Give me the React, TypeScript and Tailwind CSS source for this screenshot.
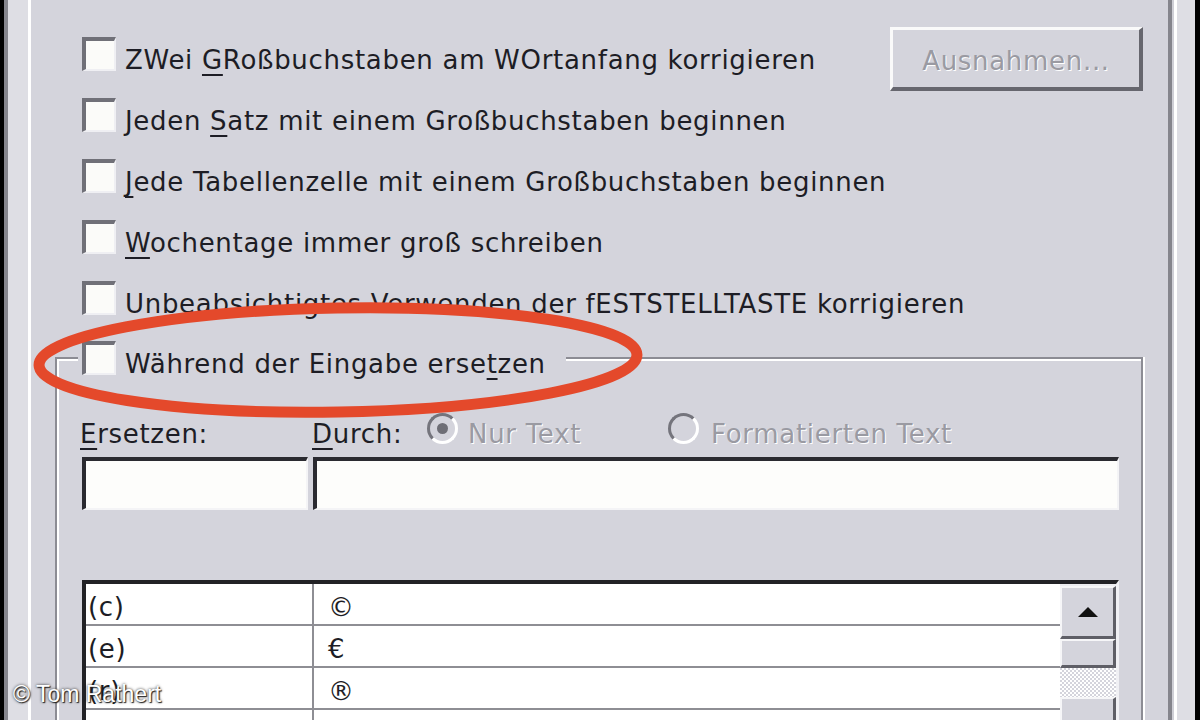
import React from "react";

function U({ children }: { children: React.ReactNode }) {
  return <span className="underline decoration-2 underline-offset-[5px]">{children}</span>;
}

function Check() {
  return (
    <div className="w-[34px] h-[34px] shrink-0 bg-[#fbfbf9] border-solid border-t-[4px] border-l-[4px] border-b-[2px] border-r-[2px] border-t-[#707078] border-l-[#707078] border-b-[#efeff3] border-r-[#efeff3]" />
  );
}

function Radio({ on }: { on?: boolean }) {
  return (
    <div className="w-[31px] h-[31px] shrink-0 rounded-full border-[3px] border-solid border-t-[#74747c] border-l-[#74747c] border-b-white border-r-white bg-[#d4d4dc] flex items-center justify-center">
      {on && <div className="w-[11px] h-[11px] rounded-full bg-[#6e6e76]" />}
    </div>
  );
}

function Option({ children }: { children: React.ReactNode }) {
  return (
    <div className="flex items-center gap-[9px] h-[34px]">
      <Check />
      <span className="whitespace-nowrap mt-[12px]">{children}</span>
    </div>
  );
}

const rows = [
  ["(c)", "©"],
  ["(e)", "€"],
  ["(r)", "®"],
  ["(tm)", "™"],
];

export default function App() {
  return (
    <div className="relative w-[1200px] h-[720px] overflow-hidden flex bg-[#d4d4dc] text-[#1d1d25] font-['DejaVu_Sans',sans-serif] text-[26px] tracking-[0.7px] leading-[34px]">
      {/* left window frame */}
      <div className="flex shrink-0">
        <div className="w-[4px] bg-black" />
        <div className="w-[4px] bg-[#85858d]" />
        <div className="w-[20px] bg-[#dedee4]" />
        <div className="w-[3px] bg-white" />
      </div>

      <div className="w-[1137px] shrink-0 flex flex-col">
        <div className="ml-[49px] w-[1065px] h-[2px] bg-[#8c8c94]" />
        <div className="ml-[49px] w-[1065px] h-[2px] bg-white" />

        <div className="pl-[51px] mt-[37px] flex flex-col gap-[27px]">
          <div className="flex items-start h-[34px]">
            <Option>
              ZWei <U>G</U>Roßbuchstaben am WOrtanfang korrigieren
            </Option>
            <div className="ml-auto mr-[25px] -mt-[10px] h-[64px] w-[253px] shrink-0 flex items-center justify-center pt-[4px] border-solid border-t-[3px] border-l-[3px] border-b-[4px] border-r-[4px] border-t-[#fafafa] border-l-[#fafafa] border-b-[#66666e] border-r-[#66666e] text-[#9a9aa2] [text-shadow:1px_1px_0_#fff]">
              Ausnahmen...
            </div>
          </div>
          <Option>
            Jeden <U>S</U>atz mit einem Großbuchstaben beginnen
          </Option>
          <Option>
            <U>J</U>ede Tabellenzelle mit einem Großbuchstaben beginnen
          </Option>
          <Option>
            <U>W</U>ochentage immer groß schreiben
          </Option>
          <Option>Unbeabsichtigtes Verwenden der fESTSTELLTASTE korrigieren</Option>
        </div>

        <fieldset className="mt-[26px] ml-[24px] w-[1088px] h-[420px] shrink-0 border-2 border-solid border-[#8c8c94] shadow-[inset_2px_2px_0_#fff,2px_0_0_#fff] pl-[21px] pr-[21px]">
          <legend className="pl-[4px] pr-[20px] bg-[#d4d4dc]">
            <Option>
              Während der Eingabe erse<U>t</U>zen
            </Option>
          </legend>

          <div className="pl-[2px]">
            <div className="mt-[36px] h-[34px] flex items-center whitespace-nowrap">
              <span className="w-[232px] shrink-0 mt-[12px]">
                <U>E</U>rsetzen:
              </span>
              <span className="w-[115px] shrink-0 mt-[12px]">
                <U>D</U>urch:
              </span>
              <div className="w-[241px] shrink-0 flex items-center gap-[10px]">
                <Radio on />
                <span className="mt-[12px] text-[#9a9aa2] [text-shadow:1px_1px_0_#fff]">Nur Text</span>
              </div>
              <div className="flex items-center gap-[12px]">
                <Radio />
                <span className="mt-[12px] text-[#9a9aa2] [text-shadow:1px_1px_0_#fff]">Formatierten Text</span>
              </div>
            </div>

            <div className="ml-[2px] mt-[12px] flex gap-[5px]">
              <div className="w-[226px] h-[53px] bg-[#fdfdfb] border-solid border-t-4 border-l-4 border-b-2 border-r-2 border-t-[#2a2a30] border-l-[#2a2a30] border-b-[#f4f4f6] border-r-[#f4f4f6]" />
              <div className="w-[806px] h-[53px] bg-[#fdfdfb] border-solid border-t-4 border-l-4 border-b-2 border-r-2 border-t-[#2a2a30] border-l-[#2a2a30] border-b-[#f4f4f6] border-r-[#f4f4f6]" />
            </div>

            <div className="ml-[2px] mt-[70px] w-[1037px] h-[200px] bg-white flex border-solid border-t-4 border-l-4 border-r-[3px] border-t-[#222226] border-l-[#222226] border-r-[#f0f0f4]">
              <div className="w-[974px] shrink-0 flex flex-col">
                {rows.map(([a, b]) => (
                  <div key={a} className="h-[42px] shrink-0 flex border-b-2 border-solid border-[#8e8e94]">
                    <div className="w-[228px] shrink-0 pl-[2px] pt-[6px] border-r-2 border-solid border-[#8e8e94] flex items-center">
                      {a}
                    </div>
                    <div className="pl-[14px] pt-[6px] flex items-center">{b}</div>
                  </div>
                ))}
              </div>
              <div className="w-[56px] shrink-0 pt-[2px] flex flex-col bg-[#ececf0]">
                <div className="h-[53px] shrink-0 flex items-center justify-center bg-[#d4d4dc] border-solid border-t-2 border-l-2 border-b-[3px] border-r-[3px] border-t-[#f6f6f8] border-l-[#f6f6f8] border-b-[#5e5e66] border-r-[#5e5e66]">
                  <svg width="24" height="12" viewBox="0 0 24 12">
                    <path d="M2 11 L12 1 L22 11 Z" fill="#111" />
                  </svg>
                </div>
                <div className="h-[29px] shrink-0 bg-[#d4d4dc] border-solid border-t-2 border-l-2 border-b-[3px] border-r-[3px] border-t-[#f6f6f8] border-l-[#f6f6f8] border-b-[#5e5e66] border-r-[#5e5e66]" />
                <div className="h-[29px] shrink-0 bg-[repeating-conic-gradient(#ffffff_0_25%,#d4d4dc_0_50%)] bg-[length:4px_4px]" />
                <div className="h-[53px] shrink-0 bg-[#d4d4dc] border-solid border-t-2 border-l-2 border-b-[3px] border-r-[3px] border-t-[#f6f6f8] border-l-[#f6f6f8] border-b-[#5e5e66] border-r-[#5e5e66]" />
              </div>
            </div>
          </div>
        </fieldset>
      </div>

      {/* right window frame */}
      <div className="flex shrink-0">
        <div className="w-[4px] bg-[#85858d]" />
        <div className="w-[2px] bg-[#cfcfd6]" />
        <div className="w-[3px] bg-white" />
        <div className="w-[18px] bg-[#dedee4]" />
        <div className="w-[5px] bg-black" />
      </div>

      {/* red marker ellipse */}
      <svg className="absolute left-0 top-0 pointer-events-none" width="1200" height="720" viewBox="0 0 1200 720">
        <ellipse
          cx="338"
          cy="360"
          rx="299"
          ry="52"
          fill="none"
          stroke="#e4492b"
          strokeWidth="11"
          transform="rotate(-1 338 360)"
        />
      </svg>

      <div className="absolute left-[13px] top-[680px] font-['Liberation_Sans',Arial,sans-serif] text-[23px] tracking-normal leading-[28px] text-white [text-shadow:0_0_3px_#222,1px_1px_1px_#222]">
        © Tom Rathert
      </div>
    </div>
  );
}
